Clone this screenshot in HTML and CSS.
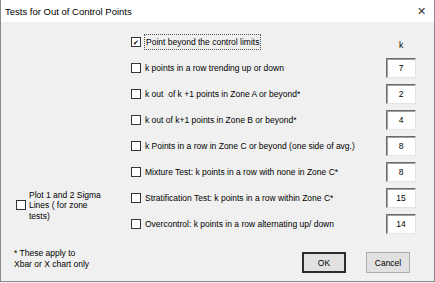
FILE: index.html
```html
<!DOCTYPE html>
<html>
<head>
<title>Tests for Out of Control Points</title>
<link rel="stylesheet" href="styles.css">
</head>
<body>
<div class="window">
<div class="titlebar">
<span class="title">Tests for Out of Control Points</span>
<span class="close">&#x2715;</span>
</div>
<div class="client">
<div class="aside">
<label class="sigma"><span class="box"></span><span class="sigma-text">Plot 1 and 2 Sigma Lines ( for zone tests)</span></label>
<p class="note">* These apply to<br>Xbar or X chart only</p>
</div>
<div class="main">
<div class="row">
<label class="check focus-row"><span class="box checked">&#x2714;</span><span class="focus">Point beyond the control limits</span></label>
<span class="k-head">k</span>
</div>
<div class="row">
<label class="check"><span class="box"></span>k points in a row trending up or down</label>
<span class="field">7</span>
</div>
<div class="row">
<label class="check"><span class="box"></span>k out&nbsp; of k +1 points in Zone A or beyond*</label>
<span class="field">2</span>
</div>
<div class="row">
<label class="check"><span class="box"></span>k out of k+1 points in Zone B or beyond*</label>
<span class="field">4</span>
</div>
<div class="row">
<label class="check"><span class="box"></span>k Points in a row in Zone C or beyond (one side of avg.)</label>
<span class="field">8</span>
</div>
<div class="row">
<label class="check"><span class="box"></span>Mixture Test: k points in a row with none in Zone C*</label>
<span class="field">8</span>
</div>
<div class="row">
<label class="check"><span class="box"></span>Stratification Test: k points in a row within Zone C*</label>
<span class="field">15</span>
</div>
<div class="row">
<label class="check"><span class="box"></span>Overcontrol: k points in a row alternating up/ down</label>
<span class="field">14</span>
</div>
<div class="buttons">
<span class="button default">OK</span>
<span class="button">Cancel</span>
</div>
</div>
</div>
</div>
</body>
</html>
```
FILE: styles.css
```css
/* Dialog: Tests for Out of Control Points */

html, body
{ margin: 0;
  padding: 0;
  background: #f0f0f0;
}

div.window
{ width: 433px;
  height: 281px;
  border: 1px solid #8a8a8a;
  border-top: none;
  background: #f0f0f0;
  font-family: "Liberation Sans", Arial, sans-serif;
  font-size: 8.5px;
  color: #000;
  display: flex;
  flex-direction: column;
}

div.titlebar
{ height: 22px;
  background: #fff;
  display: flex;
  align-items: center;
  justify-content: space-between;
  padding: 0 8px 0 4px;
}

span.title
{ font-size: 9.5px;
}

span.close
{ font-size: 11px;
  color: #333;
}

div.client
{ flex: 1;
  display: flex;
}

/* Left column */

div.aside
{ width: 128px;
  display: flex;
  flex-direction: column;
  padding: 0 0 11px 13px;
  box-sizing: border-box;
  justify-content: flex-end;
}

label.sigma
{ display: flex;
  align-items: center;
  gap: 3px;
  margin-left: 2px;
  margin-bottom: 27px;
}

span.sigma-text
{ width: 80px;
  line-height: 10.5px;
}

p.note
{ margin: 0;
  line-height: 11px;
}

/* Test rows */

div.main
{ flex: 1;
  padding: 7px 18px 0 2px;
  display: flex;
  flex-direction: column;
}

div.row
{ height: 26px;
  display: flex;
  align-items: center;
  justify-content: space-between;
}

label.check
{ display: flex;
  align-items: center;
  gap: 4px;
}

span.box
{ width: 8px;
  height: 8px;
  border: 1px solid #333;
  background: #fff;
  display: inline-flex;
  align-items: center;
  justify-content: center;
  font-size: 7px;
  line-height: 1;
  flex: none;
}

span.focus
{ outline: 1px dotted #555;
  padding: 2px 1px;
  margin-left: 0;
}

span.k-head
{ width: 30px;
  text-align: center;
  padding-top: 6px;
}

span.field
{ width: 30px;
  height: 20px;
  box-sizing: border-box;
  background: #fff;
  border: 1px solid;
  border-color: #6d6d6d #e3e3e3 #e3e3e3 #6d6d6d;
  box-shadow: inset 1px 1px 0 #a0a0a0;
  display: flex;
  align-items: center;
  justify-content: center;
}

/* Buttons */

div.buttons
{ display: flex;
  justify-content: flex-end;
  gap: 20px;
  margin-top: 15px;
  padding-right: 6px;
}

span.button
{ width: 44px;
  height: 21px;
  box-sizing: border-box;
  border: 1px solid #adadad;
  background: #e1e1e1;
  display: flex;
  align-items: center;
  justify-content: center;
}

span.button.default
{ border: 2px solid #2b2b2b;
}
```
